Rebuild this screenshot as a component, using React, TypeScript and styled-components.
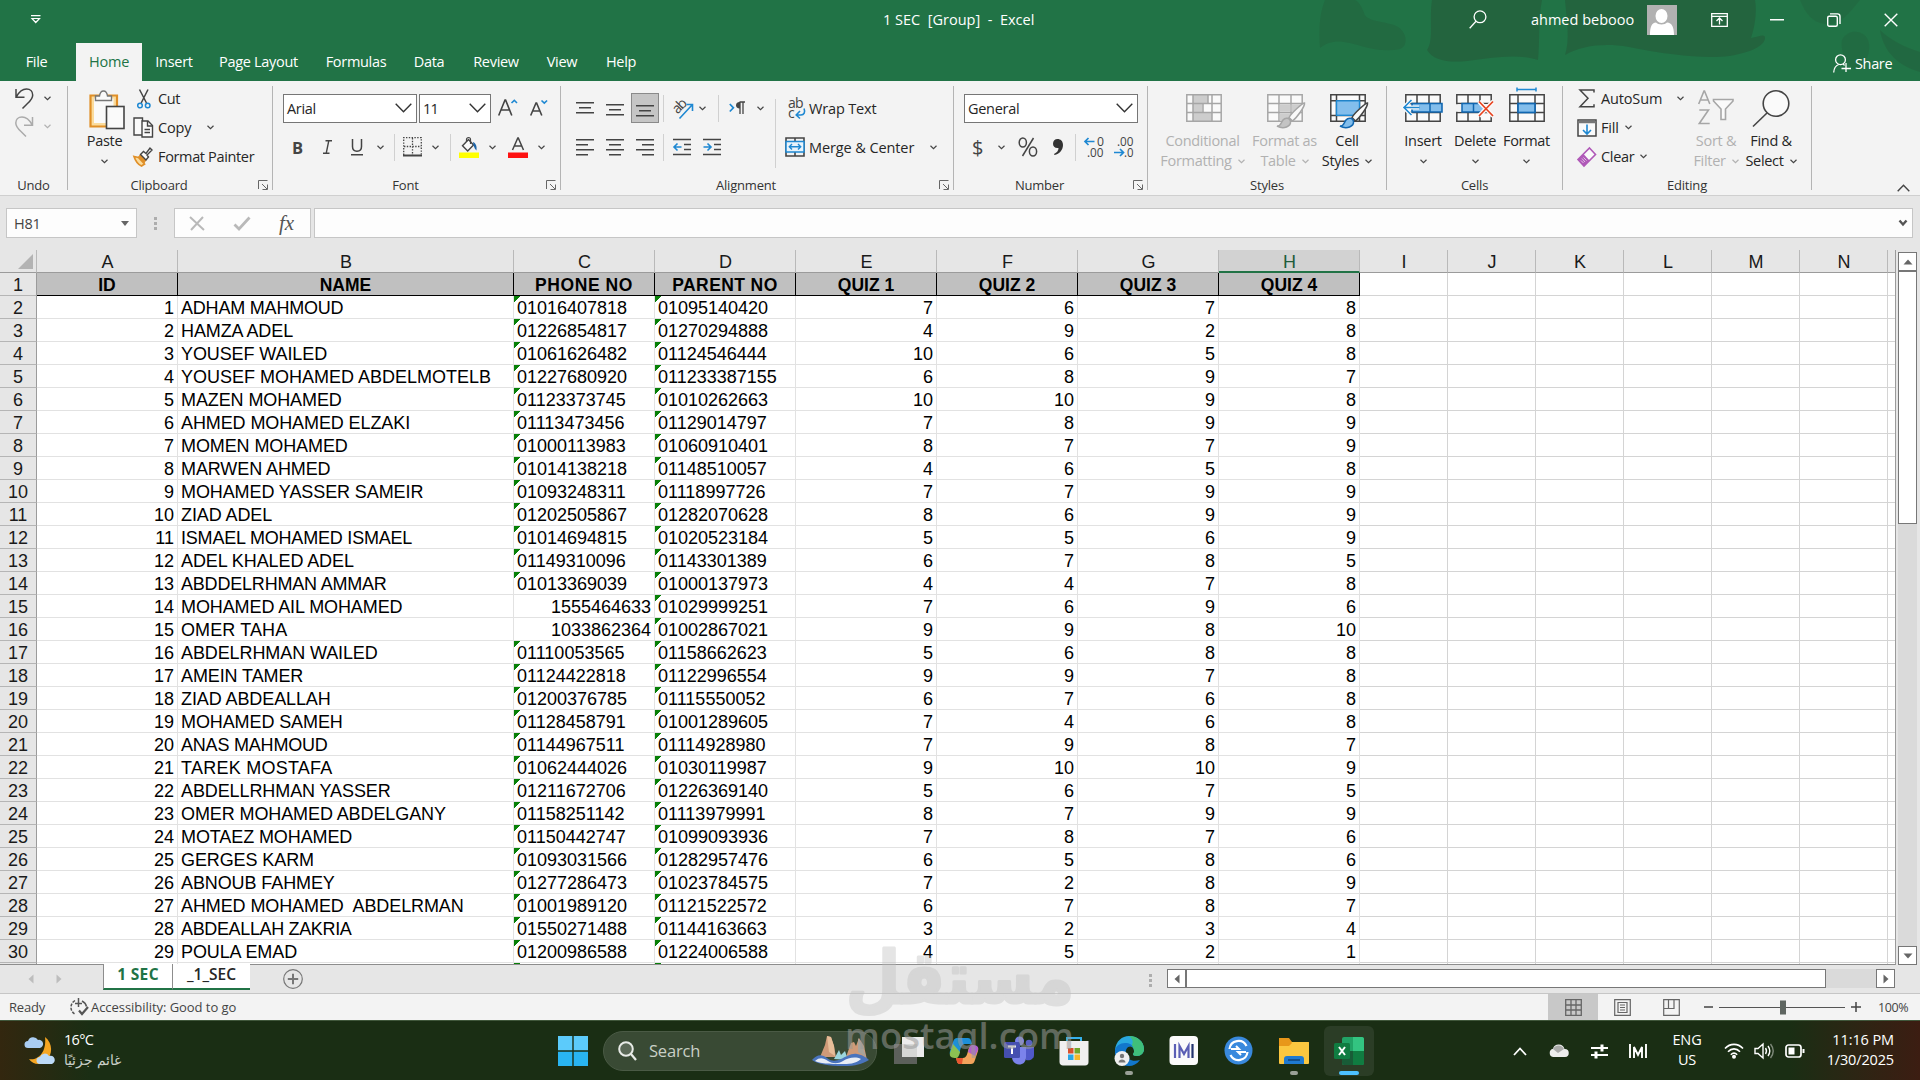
import React from "react";
import styled, { createGlobalStyle, css } from "styled-components";

const GlobalStyle = createGlobalStyle`
  * { box-sizing: border-box; }
  body {
    margin: 0;
    overflow: hidden;
    background: #e6e6e6;
    font-family: "Open Sans", "Noto Sans", sans-serif;
    color: #262626;
  }
  svg { display: block; flex: none; overflow: visible; }
`;

const green = "#217346";
const ink = "#444444";
const blue = "#1e88d2";

const Screen = styled.div`
  width: 1920px;
  height: 1080px;
  display: flex;
  flex-direction: column;
  position: relative;
  overflow: hidden;
`;

/* ---------- title bar and tabs ---------- */

const Header = styled.header`
  height: 81px;
  background: ${green};
  color: #fff;
  position: relative;
  flex: none;
`;

const HeaderArt = styled.svg`
  position: absolute;
  right: 0;
  top: 0;
`;

const TitleBar = styled.div`
  height: 43px;
  display: flex;
  align-items: center;
  position: relative;
  padding-bottom: 4px;
`;

const DocTitle = styled.span`
  font-size: 14.5px;
  white-space: pre;
`;

const TabBar = styled.nav`
  height: 38px;
  display: flex;
  position: relative;
`;

const Tab = styled.div<{ $w: number; $active?: boolean; $ls?: number }>`
  width: ${(p) => p.$w}px;
  line-height: 37px;
  text-align: center;
  font-size: 14.5px;
  letter-spacing: ${(p) => p.$ls ?? -0.3}px;
  white-space: nowrap;
  ${(p) =>
    p.$active &&
    css`
      background: #f3f3f3;
      color: ${green};
    `}
`;

const Share = styled.div`
  display: flex;
  align-items: center;
  gap: 4px;
  font-size: 14.5px;
  letter-spacing: -0.35px;
  margin: 2px 0 0 1180px;
`;

/* ---------- shared bits ---------- */

const Slot = styled.div<{ $w: number }>`
  width: ${(p) => p.$w}px;
  flex: none;
  display: flex;
  align-items: center;
`;

const Grow = styled.div`
  flex: 1;
`;

const Text = styled.span<{
  $size?: number;
  $ls?: number;
  $color?: string;
  $bold?: boolean;
}>`
  font-size: ${(p) => p.$size ?? 14.5}px;
  letter-spacing: ${(p) => p.$ls ?? -0.35}px;
  color: ${(p) => p.$color ?? "inherit"};
  font-weight: ${(p) => (p.$bold ? 700 : 400)};
  white-space: nowrap;
`;

/* ---------- ribbon ---------- */

const Ribbon = styled.section`
  height: 115px;
  padding-top: 5px;
  display: flex;
  align-items: flex-start;
  background: #f3f3f3;
  border-bottom: 1px solid #cfcfcf;
  flex: none;
`;

const Group = styled.div<{ $w: number }>`
  width: ${(p) => p.$w}px;
  height: 104px;
  flex: none;
  display: flex;
  flex-direction: column;
  border-right: 1px solid #b4b4b4;
`;

const GroupBody = styled.div`
  height: 94px;
  display: flex;
`;

const GroupLabel = styled.div<{ $launcher?: boolean }>`
  height: 10px;
  line-height: 10px;
  display: grid;
  grid-template-columns: ${(p) => (p.$launcher ? "1fr 14px" : "1fr")};
  column-gap: 8px;
  text-align: center;
  font-size: 13px;
  letter-spacing: -0.2px;
  color: #333;
`;

const Rows = styled.div<{ $three?: boolean }>`
  display: flex;
  flex-direction: column;
  ${(p) =>
    p.$three
      ? css`
          margin-top: -2px;
        `
      : css`
          padding-top: 7px;
          gap: 9px;
        `}
`;

const Row = styled.div<{ $h?: number }>`
  height: ${(p) => p.$h ?? 30}px;
  display: flex;
  align-items: center;
`;

const BigButton = styled.div<{ $w: number; $off?: boolean }>`
  width: ${(p) => p.$w}px;
  flex: none;
  display: flex;
  flex-direction: column;
  align-items: center;
  font-size: 14.5px;
  letter-spacing: -0.3px;
  white-space: nowrap;
  color: ${(p) => (p.$off ? "#b1b1b1" : "#262626")};
`;

const BigIcon = styled.div`
  height: 45px;
  display: flex;
  align-items: flex-start;
`;

const BigLine = styled.div`
  height: 20px;
  line-height: 20px;
  display: flex;
  align-items: center;
  gap: 6px;
`;

const Combo = styled.div<{ $w: number }>`
  width: ${(p) => p.$w}px;
  height: 29px;
  flex: none;
  display: flex;
  align-items: center;
  justify-content: space-between;
  padding: 0 4px 0 3px;
  background: #fff;
  border: 1px solid #767676;
`;

const Rule = styled.div<{ $h?: number }>`
  width: 1px;
  height: ${(p) => p.$h ?? 27}px;
  background: #d0d0d0;
`;

const Pressed = styled.div`
  width: 28px;
  height: 30px;
  display: flex;
  align-items: center;
  justify-content: center;
  background: #c5c5c5;
  border: 1px solid #8a8a8a;
`;

const Collapse = styled.div`
  margin: 98px 0 0 85px;
`;

const Chevron = ({ color = ink }: { color?: string }) => (
  <svg width="7" height="5" viewBox="0 0 7 5" fill="none">
    <path d="M0.5 0.8l3 2.8 3-2.8" stroke={color} strokeWidth="1.2" />
  </svg>
);

const WideChevron = () => (
  <svg width="17" height="10" viewBox="0 0 17 10" fill="none">
    <path d="M0.7 0.7l7.8 8 7.8-8" stroke="#333" strokeWidth="1.4" />
  </svg>
);

const Launcher = () => (
  <svg width="10" height="10" viewBox="0 0 10 10" fill="none">
    <path d="M0.5 9V0.5H9.5M4 4l5 5M9.5 4.5v5h-5" stroke="#666" />
  </svg>
);

const Lines = ({ rows }: { rows: [number, number, number][] }) => (
  <svg width="18" height="18" viewBox="0 0 18 18">
    {rows.map(([x1, x2, y]) => (
      <rect key={y} x={x1} y={y} width={x2 - x1} height="1.5" fill={ink} />
    ))}
  </svg>
);

const UndoIcon = ({ redo }: { redo?: boolean }) => (
  <svg width="19" height="21" viewBox="0 0 19 21" fill="none">
    <g
      transform={redo ? "translate(18.5 0) scale(-1 1)" : undefined}
      stroke={redo ? "#ababab" : ink}
      strokeWidth="1.5"
    >
      <path d="M1 1v8.2h8.5M1.3 8.8C4 4 7 1 11.5 1c4 0 6.2 2.8 6.2 6 0 4-3 6.5-5.7 9L7.5 20.5" />
    </g>
  </svg>
);

const PasteIcon = () => (
  <svg width="36" height="42" viewBox="0 -3.5 36 42">
    <rect x="2" y="6.5" width="26" height="30.5" fill="#fbdc9d" />
    <path d="M1.5 6h26.5v31H1.5z" fill="none" stroke="#e08f27" strokeWidth="2.2" />
    <rect x="5" y="9" width="19.5" height="24.5" fill="#fafafa" />
    <path
      d="M6.5 11V6.5h4C11 3 12.5 1.5 14.5 1.5S18 3 18.5 6.5h4V11z"
      fill="#fafafa"
      stroke="#777"
      strokeWidth="1.4"
    />
    <rect x="17.5" y="17" width="17.5" height="22" fill="#fafafa" stroke={ink} strokeWidth="1.6" />
  </svg>
);

const CutIcon = () => (
  <svg width="14" height="20" viewBox="0 0 14 20" fill="none">
    <path d="M2.5 0.5l7 13.5M11 0.5L4.2 14" stroke={ink} strokeWidth="1.5" />
    <circle cx="3" cy="16.5" r="2.3" stroke={blue} strokeWidth="1.5" />
    <circle cx="10.7" cy="16.5" r="2.3" stroke={blue} strokeWidth="1.5" />
  </svg>
);

const CopyIcon = () => (
  <svg width="21" height="21" viewBox="0 0 21 21" fill="#fafafa" stroke={ink} strokeWidth="1.4">
    <path d="M9 18H1V1h8.5v3" />
    <path d="M9 4h6l4.5 4.5V20H9z" />
    <path d="M14.5 4v5h5M11.5 12.5h5.5M11.5 15.5h5.5" fill="none" />
  </svg>
);

const PainterIcon = () => (
  <svg width="20" height="20" viewBox="0 0 20 20" fill="none">
    <path d="M1 9.5l4.5 1 6 6.5-3 2C5 17.5 2.5 14 1 9.5z" fill="#fbdc9d" stroke="#e08f27" strokeWidth="1.7" />
    <path d="M5.5 10l2-2.5L13 13l-2 3z" fill="#e08f27" stroke="#e08f27" />
    <path d="M7.5 7.5l3-3 2.5 2L17 1l2 2-5 5 1.5 2-2.5 3z" fill="#fafafa" stroke={ink} strokeWidth="1.4" />
  </svg>
);

const FontSizeIcon = ({ down }: { down?: boolean }) => (
  <svg width="20" height="20" viewBox="0 0 20 20" fill="none">
    {down ? (
      <>
        <path d="M0.7 17.5L6 5h.6l5.2 12.5M2.6 13h7.4" stroke={ink} strokeWidth="1.6" />
        <path d="M11.5 2.5l2.8 2.7 2.8-2.7" stroke={blue} strokeWidth="1.6" />
      </>
    ) : (
      <>
        <path d="M0.7 17.5L7 2h.6l6.2 15.5M3 12h8.8" stroke={ink} strokeWidth="1.6" />
        <path d="M13.5 5l2.8-2.7L19 5" stroke={blue} strokeWidth="1.6" />
      </>
    )}
  </svg>
);

const BordersIcon = () => (
  <svg width="19" height="20" viewBox="0 0 19 20" fill="none" stroke={ink}>
    <path
      d="M0.7 18V0.7h17.6V18M9.5 1v17M1 9.5h17"
      strokeWidth="1.3"
      strokeDasharray="1.4 1.4"
    />
    <path d="M0 18.5h19" strokeWidth="2" />
  </svg>
);

const FillColorIcon = () => (
  <svg width="20" height="21" viewBox="0 0 20 21" fill="none">
    <path d="M3.5 8.8L9.5 2.5l5 5.5-5.8 6z" fill="#fafafa" stroke={ink} strokeWidth="1.4" />
    <path d="M7.5 5V2.5a2 2 0 014 0V7" stroke={ink} strokeWidth="1.2" />
    <path d="M14 5c3 1.5 4 4 3.5 8.5-1.5-1-2-3-3-5z" fill="#1d64a8" />
    <rect y="15.5" width="20" height="5.5" fill="#ffff00" />
  </svg>
);

const FontColorIcon = () => (
  <svg width="20" height="21" viewBox="0 0 20 21" fill="none">
    <path d="M4.5 13L9.8 1h.5l5.2 12M6.5 9h7.2" stroke={ink} strokeWidth="1.5" />
    <rect y="15.5" width="20" height="5.5" fill="#fe1111" />
  </svg>
);

const OrientationIcon = () => (
  <svg width="21" height="21" viewBox="0 0 21 21" fill="none">
    <text
      x="0"
      y="0"
      fontSize="14"
      fill={ink}
      transform="translate(5.5 16.5) rotate(-45)"
      fontFamily="Open Sans"
      textLength="15"
    >
      ab
    </text>
    <path d="M7.5 20.5L20 7M14.5 6.5h6v6.5" stroke={blue} strokeWidth="1.6" />
  </svg>
);

const DirectionIcon = () => (
  <svg width="17" height="14" viewBox="0 0 17 14" fill="none">
    <path d="M0.8 3l3.6 3.8L0.8 10.5" stroke={blue} strokeWidth="1.7" />
    <path d="M10.5 1H16M11 1v12M14 1v12" stroke={ink} strokeWidth="1.3" />
    <path d="M11 7.5C8 7.5 7 6 7 4.2S8.2 1 10.5 1h.5z" fill={ink} />
  </svg>
);

const IndentIcon = ({ right }: { right?: boolean }) => (
  <svg width="19" height="18" viewBox="0 0 19 18" fill="none">
    <path d="M0 1.5h18M11 6.5h7M11 11.5h7M0 16.5h18" stroke={ink} strokeWidth="1.5" />
    <path
      d={right ? "M0.5 9h7M4.5 5.5L8 9l-3.5 3.5" : "M8.5 9H1M4.5 5.5L1 9l3.5 3.5"}
      stroke={blue}
      strokeWidth="1.6"
    />
  </svg>
);

const WrapIcon = () => (
  <svg width="18" height="21" viewBox="0 0 18 21" fill="none">
    <text x="0" y="9.5" fontSize="14" fill={ink} fontFamily="Open Sans" textLength="15.5">
      ab
    </text>
    <text x="0" y="20" fontSize="14" fill={ink} fontFamily="Open Sans">
      c
    </text>
    <path d="M16 10.5c1.5 3.5 0 6.5-3 6.5H8.5M12 13l-3.8 4 3.8 3.5" stroke={blue} strokeWidth="1.6" />
  </svg>
);

const MergeIcon = () => (
  <svg width="20" height="20" viewBox="0 0 20 20" fill="none">
    <path d="M1 1h18v18H1zM10 1v4M10 15v4" stroke={ink} strokeWidth="1.6" />
    <rect x="1" y="4.5" width="18" height="10.5" fill="#e8f3fb" stroke={blue} strokeWidth="1.5" />
    <path d="M4.5 9.7h11M7 7L4.3 9.7 7 12.5M13 7l2.7 2.7L13 12.5" stroke={blue} strokeWidth="1.4" />
  </svg>
);

const DecimalIcon = ({ more }: { more?: boolean }) => (
  <svg width="20" height="22" viewBox="0 0 20 22" fill="none">
    <text
      x={more ? 13 : 3}
      y="9.5"
      fontSize="12.5"
      fill={ink}
      fontFamily="Open Sans"
      textLength={more ? 7 : 16.5}
      lengthAdjust="spacingAndGlyphs"
    >
      {more ? "0" : ".00"}
    </text>
    <text
      x={more ? 3 : 10}
      y="21"
      fontSize="12.5"
      fill={ink}
      fontFamily="Open Sans"
      textLength={more ? 16.5 : 9.5}
      lengthAdjust="spacingAndGlyphs"
    >
      {more ? ".00" : ".0"}
    </text>
    <path
      d={more ? "M10.5 5.5H1M4.5 2L1 5.5 4.500 9" : "M0 16.500h9.500M6 13l3.500 3.500L6 20"}
      stroke={blue}
      strokeWidth="1.7"
    />
  </svg>
);

const Sheet = ({ color = ink }: { color?: string }) => (
  <path
    d="M0.8 0.8h34.4v26.4H0.8zM12 1v26M24 1v26M1 9.5h34M1 18.5h34"
    fill="#fafafa"
    stroke={color}
    strokeWidth="1.5"
  />
);

const CondFormatIcon = () => (
  <svg width="36" height="34" viewBox="0 -8 36 34">
    <rect x="0" y="0" width="36" height="28" fill="#fafafa" />
    <path d="M7 1h15v8H7zM7 9h9.5v9.5H7zM7 18.5h19V27H7z" fill="#cdcdcd" />
    <path
      d="M0.8 0.8h34.4v26.4H0.8zM7 1v26M26 1v26M1 9.5h34M1 18.5h34M22 1v8.5M17 9.5v9"
      fill="none"
      stroke="#a6a6a6"
      strokeWidth="1.5"
    />
  </svg>
);

const Brush = ({ stroke, fill, tip }: { stroke: string; fill: string; tip: string }) => (
  <>
    <path
      d="M37.500 9c-2 0-13 10-15.500 14.500l3.500 3.500C30 23.500 38 12.500 37.500 9z"
      fill="#fafafa"
      stroke={stroke}
      strokeWidth="1.5"
    />
    <path d="M10 32c4 .5 4-3.500 6-6 2.500-3 7-2 7.500 1.500C24 32 17 36 10 32z" fill={fill} stroke={tip} strokeWidth="1.5" />
  </>
);

const FormatTableIcon = () => (
  <svg width="40" height="36" viewBox="-2 -8 40 36">
    <Sheet color="#a6a6a6" />
    <path d="M12.7 10.2h10.6v7.6H12.7zM24.7 10.2h10v7.6h-10zM12.7 19.2h10.6v7.3H12.7z" fill="#cdcdcd" />
    <Brush stroke="#a6a6a6" fill="#c4c4c4" tip="#a6a6a6" />
  </svg>
);

const CellStylesIcon = () => (
  <svg width="40" height="36" viewBox="-2 -8 40 36">
    <path
      d="M0.8 0.8h34.4v26.4H0.8zM6.5 1v26M29.5 1v26M1 6.8h34M1 21.5h34"
      fill="#fafafa"
      stroke={ink}
      strokeWidth="1.5"
    />
    <rect x="6.5" y="6.8" width="23" height="14.5" fill="#83beec" stroke={blue} strokeWidth="1.4" />
    <Brush stroke={ink} fill="#83beec" tip="#1167b1" />
  </svg>
);

const InsertIcon = () => (
  <svg width="40" height="36" viewBox="0 -8 40 36" fill="none">
    <g transform="translate(2 0)">
      <Sheet />
    </g>
    <path d="M9 9.5h30V18H9z" fill="#83beec" stroke="#1167b1" strokeWidth="1.6" />
    <path d="M27 9.5V18" stroke="#1167b1" strokeWidth="1.5" />
    <path d="M16 13.5H1M8 6L1 13.5 8 21" stroke="#fafafa" strokeWidth="4" />
    <path d="M16.5 13.5H1M8.5 6L1 13.5 8.5 21" stroke={blue} strokeWidth="1.6" />
  </svg>
);

const DeleteIcon = () => (
  <svg width="38" height="36" viewBox="0 -8 38 36" fill="none">
    <Sheet />
    <path d="M0 10.3h5.3v7.4H0zM24 10h12v8H24z" fill="#f3f3f3" />
    <path d="M6 9.5h20l3 4.5-3 4H6z" fill="#83beec" stroke="#1167b1" strokeWidth="1.5" />
    <path d="M17.5 9.5V18" stroke="#1167b1" strokeWidth="1.5" />
    <path d="M23 7.5L37 22M37 7.5L23 22" stroke="#fafafa" strokeWidth="4.5" />
    <path d="M23 7.5L37 22M37 7.5L23 22" stroke="#e8431f" strokeWidth="1.7" />
  </svg>
);

const FormatIcon = () => (
  <svg width="36" height="36" viewBox="0 -8 36 36" fill="none">
    <path
      d="M0.8 0.8h34.4v26.4H0.8zM9 1v26M26 1v26M1 9.5h34M1 18.5h34"
      fill="#fafafa"
      stroke={ink}
      strokeWidth="1.5"
    />
    <rect x="9" y="9.5" width="17" height="9" fill="#83beec" stroke="#1167b1" strokeWidth="1.7" />
    <path d="M8 -4.5h19M8 -6.5v4M27 -6.5v4" stroke={blue} strokeWidth="1.5" />
  </svg>
);

const SigmaIcon = () => (
  <svg width="16" height="19" viewBox="0 0 16 19" fill="none">
    <path d="M15 3.5V1H1l8 8.3L1 17.8h14v-2.5" stroke={ink} strokeWidth="1.5" />
  </svg>
);

const FillDownIcon = () => (
  <svg width="20" height="18" viewBox="0 0 20 18" fill="none">
    <path d="M1 1h18v16H1z" fill="#fafafa" stroke={ink} strokeWidth="1.5" />
    <path d="M1 3h18" stroke="#777" strokeWidth="2.5" />
    <path d="M10 5.5v9M6 11l4 4 4-4" stroke={blue} strokeWidth="1.6" />
  </svg>
);

const ClearIcon = () => (
  <svg width="20" height="20" viewBox="0 0 20 20">
    <path d="M12.5 1l6 6.5L7 19l-6-6.5z" fill="#fafafa" stroke="#b059b8" strokeWidth="1.6" />
    <path d="M6.5 7l6 6.5L7 19l-6-6.5z" fill="#b059b8" />
    <path d="M5 11.5l3 3.5M4 13.5l2.5 2.5M6.5 10.5l3 3" stroke="#e9cdec" strokeWidth="0.9" />
  </svg>
);

const SortIcon = () => (
  <svg width="36" height="40" viewBox="0 -4 36 40" fill="none" stroke="#a6a6a6" strokeWidth="1.6">
    <path d="M0.7 14L6 1h.5l5.3 13M2.6 10h7.4M1.3 20h9.2L1.3 33.5h10.4" />
    <path d="M15.5 9.5h19.5v1.5L27.5 19v10.5h-4.5V19l-7.5-8z" fill="#fafafa" />
  </svg>
);

const FindIcon = () => (
  <svg width="38" height="40" viewBox="0 -3 38 40" fill="none" stroke={ink} strokeWidth="1.6">
    <circle cx="24" cy="14.5" r="12.8" fill="#fafafa" />
    <path d="M15 24L1 37.5" />
  </svg>
);

const RibbonBar = () => (
  <Ribbon>
    <Group $w={68}>
      <GroupBody>
        <Rows $three>
          <Row $h={28}>
            <Slot $w={15} />
            <Slot $w={29}><UndoIcon /></Slot>
            <Chevron />
          </Row>
          <Row $h={29}>
            <Slot $w={15} />
            <Slot $w={29}><UndoIcon redo /></Slot>
            <Chevron color="#b1b1b1" />
          </Row>
        </Rows>
      </GroupBody>
      <GroupLabel>Undo</GroupLabel>
    </Group>

    <Group $w={205}>
      <GroupBody>
        <Slot $w={14} />
        <BigButton $w={45}>
          <BigIcon><Slot $w={5} /><PasteIcon /></BigIcon>
          <BigLine>Paste</BigLine>
          <BigLine><Chevron /></BigLine>
        </BigButton>
        <Slot $w={6} />
        <Rows $three>
          <Row $h={29}>
            <Slot $w={4} />
            <Slot $w={21}><CutIcon /></Slot>
            <Text>Cut</Text>
          </Row>
          <Row $h={29}>
            <Slot $w={25}><CopyIcon /></Slot>
            <Slot $w={49}><Text $ls={-0.2}>Copy</Text></Slot>
            <Chevron />
          </Row>
          <Row $h={29}>
            <Slot $w={25}><PainterIcon /></Slot>
            <Text>Format Painter</Text>
          </Row>
        </Rows>
      </GroupBody>
      <GroupLabel $launcher><span>Clipboard</span><Launcher /></GroupLabel>
    </Group>

    <Group $w={288}>
      <GroupBody>
        <Rows>
          <Row>
            <Slot $w={10} />
            <Slot $w={136}>
              <Combo $w={134}><Text>Arial</Text><WideChevron /></Combo>
            </Slot>
            <Slot $w={79}>
              <Combo $w={72}><Text $ls={-0.9}>11</Text><WideChevron /></Combo>
            </Slot>
            <Slot $w={32}><FontSizeIcon /></Slot>
            <FontSizeIcon down />
          </Row>
          <Row>
            <Slot $w={19} />
            <Slot $w={31}><Text $bold $size={16.5} $color={ink}>B</Text></Slot>
            <Slot $w={28}>
              <svg width="9" height="14" viewBox="0 0 9 14" fill="none">
                <path d="M2.5 0.7H9M0 13.3h6.5M5.8 0.7L3.2 13.3" stroke={ink} strokeWidth="1.4" />
              </svg>
            </Slot>
            <Slot $w={26}>
              <svg width="12" height="17" viewBox="0 0 12 17" fill="none">
                <path
                  d="M1.5 0v7.5c0 3.2 1.5 4.7 4.5 4.7s4.5-1.5 4.5-4.7V0M0 15.7h12"
                  stroke={ink}
                  strokeWidth="1.5"
                />
              </svg>
            </Slot>
            <Slot $w={17}><Chevron /></Slot>
            <Slot $w={9}><Rule /></Slot>
            <Slot $w={29}><BordersIcon /></Slot>
            <Slot $w={18}><Chevron /></Slot>
            <Slot $w={9}><Rule /></Slot>
            <Slot $w={30}><FillColorIcon /></Slot>
            <Slot $w={19}><Chevron /></Slot>
            <Slot $w={30}><FontColorIcon /></Slot>
            <Chevron />
          </Row>
        </Rows>
      </GroupBody>
      <GroupLabel $launcher><span>Font</span><Launcher /></GroupLabel>
    </Group>

    <Group $w={393}>
      <GroupBody>
        <Rows>
          <Row>
            <Slot $w={15} />
            <Slot $w={30}><Lines rows={[[0, 18, 3], [3, 15, 8], [0, 18, 13]]} /></Slot>
            <Slot $w={25}><Lines rows={[[0, 18, 5], [3, 15, 10], [0, 18, 15]]} /></Slot>
            <Slot $w={32}>
              <Pressed><Lines rows={[[0, 18, 6], [3, 15, 11], [0, 18, 16]]} /></Pressed>
            </Slot>
            <Slot $w={9}><Rule /></Slot>
            <Slot $w={27}><OrientationIcon /></Slot>
            <Slot $w={19}><Chevron /></Slot>
            <Slot $w={11}><Rule /></Slot>
            <Slot $w={28}><DirectionIcon /></Slot>
            <Chevron />
          </Row>
          <Row>
            <Slot $w={15} />
            <Slot $w={30}><Lines rows={[[0, 18, 1], [0, 12, 6], [0, 18, 11], [0, 12, 16]]} /></Slot>
            <Slot $w={30}><Lines rows={[[0, 18, 1], [3, 15, 6], [0, 18, 11], [3, 15, 16]]} /></Slot>
            <Slot $w={27}><Lines rows={[[0, 18, 1], [6, 18, 6], [0, 18, 11], [6, 18, 16]]} /></Slot>
            <Slot $w={10}><Rule /></Slot>
            <Slot $w={30}><IndentIcon /></Slot>
            <IndentIcon right />
          </Row>
        </Rows>
        <Slot $w={11} />
        <Slot $w={10}><Rule $h={69} /></Slot>
        <Rows>
          <Row>
            <Slot $w={3} />
            <Slot $w={21}><WrapIcon /></Slot>
            <Text $ls={-0.15}>Wrap Text</Text>
          </Row>
          <Row>
            <Slot $w={24}><MergeIcon /></Slot>
            <Slot $w={121}><Text $ls={-0.1}>Merge &amp; Center</Text></Slot>
            <Chevron />
          </Row>
        </Rows>
      </GroupBody>
      <GroupLabel $launcher><span>Alignment</span><Launcher /></GroupLabel>
    </Group>

    <Group $w={194}>
      <GroupBody>
        <Rows>
          <Row>
            <Slot $w={10} />
            <Combo $w={174}><Text $ls={-0.3}>General</Text><WideChevron /></Combo>
          </Row>
          <Row>
            <Slot $w={18} />
            <Slot $w={26}><Text $size={20} $color={ink}>$</Text></Slot>
            <Slot $w={20}><Chevron /></Slot>
            <Slot $w={35}>
              <svg width="20" height="20" viewBox="0 0 20 20" fill="none" stroke={ink} strokeWidth="1.5">
                <path d="M15.5 1L4.5 19" />
                <ellipse cx="4.8" cy="5.5" rx="3.6" ry="4.5" />
                <ellipse cx="15" cy="14.5" rx="3.6" ry="4.5" />
              </svg>
            </Slot>
            <Slot $w={22}>
              <svg width="10" height="16" viewBox="0 0 10 16">
                <path
                  d="M4.5 0C7.5 0 10 2 10 6c0 5-3.5 9-8.5 10l-.5-1c3-1.5 4.5-3.5 4.5-6C2 9.5 0 7.5 0 4.8 0 2 2 0 4.5 0z"
                  fill="#333"
                />
              </svg>
            </Slot>
            <Slot $w={9}><Rule /></Slot>
            <Slot $w={30}><DecimalIcon more /></Slot>
            <DecimalIcon />
          </Row>
        </Rows>
      </GroupBody>
      <GroupLabel $launcher><span>Number</span><Launcher /></GroupLabel>
    </Group>

    <Group $w={239}>
      <GroupBody>
        <Slot $w={8} />
        <BigButton $w={93} $off>
          <BigIcon><Slot $w={3} /><CondFormatIcon /></BigIcon>
          <BigLine>Conditional</BigLine>
          <BigLine>Formatting <Chevron color="#b1b1b1" /></BigLine>
        </BigButton>
        <BigButton $w={71} $off>
          <BigIcon><FormatTableIcon /></BigIcon>
          <BigLine>Format as</BigLine>
          <BigLine>Table <Chevron color="#b1b1b1" /></BigLine>
        </BigButton>
        <BigButton $w={54}>
          <BigIcon><Slot $w={2} /><CellStylesIcon /></BigIcon>
          <BigLine>Cell</BigLine>
          <BigLine>Styles <Chevron /></BigLine>
        </BigButton>
      </GroupBody>
      <GroupLabel>Styles</GroupLabel>
    </Group>

    <Group $w={176}>
      <GroupBody>
        <Slot $w={10} />
        <BigButton $w={52}>
          <BigIcon><InsertIcon /></BigIcon>
          <BigLine>Insert</BigLine>
          <BigLine><Chevron /></BigLine>
        </BigButton>
        <BigButton $w={52}>
          <BigIcon><DeleteIcon /></BigIcon>
          <BigLine>Delete</BigLine>
          <BigLine><Chevron /></BigLine>
        </BigButton>
        <BigButton $w={51}>
          <BigIcon><FormatIcon /></BigIcon>
          <BigLine>Format</BigLine>
          <BigLine><Chevron /></BigLine>
        </BigButton>
      </GroupBody>
      <GroupLabel>Cells</GroupLabel>
    </Group>

    <Group $w={249}>
      <GroupBody>
        <Slot $w={14} />
        <Rows $three>
          <Row $h={29}>
            <Slot $w={2} />
            <Slot $w={22}><SigmaIcon /></Slot>
            <Slot $w={76}><Text $ls={-0.15}>AutoSum</Text></Slot>
            <Chevron />
          </Row>
          <Row $h={29}>
            <Slot $w={24}><FillDownIcon /></Slot>
            <Slot $w={24}><Text $ls={-0.2}>Fill</Text></Slot>
            <Chevron />
          </Row>
          <Row $h={29}>
            <Slot $w={24}><ClearIcon /></Slot>
            <Slot $w={39}><Text $ls={-0.3}>Clear</Text></Slot>
            <Chevron />
          </Row>
        </Rows>
        <Slot $w={4} />
        <BigButton $w={56} $off>
          <BigIcon><SortIcon /></BigIcon>
          <BigLine>Sort &amp;</BigLine>
          <BigLine>Filter <Chevron color="#b1b1b1" /></BigLine>
        </BigButton>
        <BigButton $w={54}>
          <BigIcon><FindIcon /></BigIcon>
          <BigLine>Find &amp;</BigLine>
          <BigLine>Select <Chevron /></BigLine>
        </BigButton>
      </GroupBody>
      <GroupLabel>Editing</GroupLabel>
    </Group>

    <Collapse>
      <svg width="13" height="8" viewBox="0 0 13 8" fill="none">
        <path d="M0.7 7.3l5.8-6 5.8 6" stroke={ink} strokeWidth="1.4" />
      </svg>
    </Collapse>
  </Ribbon>
);

/* ---------- formula bar ---------- */

const FormulaBar = styled.section`
  height: 54px;
  padding: 12px 7px 0 6px;
  display: flex;
  align-items: flex-start;
  background: #e6e6e6;
  flex: none;
`;

const Field = styled.div<{ $w?: number; $gap?: number }>`
  height: 30px;
  ${(p) => (p.$w ? `width: ${p.$w}px; flex: none;` : "flex: 1;")}
  margin-right: ${(p) => p.$gap ?? 0}px;
  display: flex;
  align-items: center;
  background: #fdfdfd;
  border: 1px solid #c6c6c6;
`;

const Dots = styled.div<{ $ml: number; $mr: number }>`
  width: 3px;
  height: 30px;
  margin: 0 ${(p) => p.$mr}px 0 ${(p) => p.$ml}px;
  display: flex;
  flex-direction: column;
  justify-content: center;
  gap: 2px;
  &::before,
  &::after,
  & > i {
    content: "";
    display: block;
    width: 3px;
    height: 3px;
    background: #adadad;
  }
`;

const Fx = styled.span`
  font-family: "Liberation Serif", serif;
  font-style: italic;
  font-size: 21px;
  color: #555;
`;

/* ---------- grid ---------- */

const GridArea = styled.main`
  height: 715px;
  display: flex;
  flex: none;
  background: #e6e6e6;
`;

const Grid = styled.div`
  width: 1896px;
  height: 715px;
  overflow: hidden;
  font-family: "Liberation Sans", Arial, sans-serif;
  font-size: 18px;
  color: #000;
  border-right: 1px solid #9b9b9b;
  border-bottom: 1px solid #8d8d8d;
`;

const GridRow = styled.div`
  height: 23px;
  display: flex;
`;

const ColumnHead = styled.div<{ $w: number; $selected?: boolean }>`
  width: ${(p) => p.$w}px;
  height: 23px;
  flex: none;
  text-align: center;
  line-height: 24px;
  padding-left: 1px;
  color: ${(p) => (p.$selected ? "#1f5c3b" : "#1a1a1a")};
  background: ${(p) => (p.$selected ? "#d2d2d2" : "#e6e6e6")};
  border-right: 1px solid #b9b9b9;
  border-bottom: ${(p) => (p.$selected ? `2px solid ${green}` : "1px solid #9b9b9b")};
`;

const Corner = styled.div`
  width: 37px;
  height: 23px;
  flex: none;
  padding: 4px 0 0 18px;
  border-right: 1px solid #b9b9b9;
  border-bottom: 1px solid #9b9b9b;
`;

const RowHead = styled.div`
  width: 37px;
  flex: none;
  text-align: center;
  line-height: 24px;
  background: #e6e6e6;
  color: #1a1a1a;
  border-right: 1px solid #9b9b9b;
  border-bottom: 1px solid #b5b5b5;
`;

const TitleCell = styled.div<{ $w: number; $ls: number }>`
  width: ${(p) => p.$w}px;
  flex: none;
  text-align: center;
  line-height: 25px;
  font-weight: 700;
  font-size: 17.5px;
  letter-spacing: ${(p) => p.$ls}px;
  background: #c0c0c0;
  border-right: 1px solid #000;
  border-bottom: 1px solid #000;
`;

const Cell = styled.div<{ $w: number; $text?: boolean; $flag?: boolean; $empty?: boolean; $ls?: number }>`
  width: ${(p) => p.$w}px;
  flex: none;
  line-height: 24px;
  white-space: pre;
  padding: 0 3px;
  letter-spacing: ${(p) => p.$ls ?? 0}px;
  text-align: ${(p) => (p.$text ? "left" : "right")};
  border-right: 1px solid ${(p) => (p.$empty ? "#d4d4d4" : "#e2e2e2")};
  border-bottom: 1px solid ${(p) => (p.$empty ? "#d4d4d4" : "#e2e2e2")};
  background: ${(p) =>
    p.$flag ? "linear-gradient(135deg, #078007 4.8px, #fff 4.9px)" : "#fff"};
`;

const students: [string, string, string, number, number, number, number][] = [
  ["ADHAM MAHMOUD", "01016407818", "01095140420", 7, 6, 7, 8],
  ["HAMZA ADEL", "01226854817", "01270294888", 4, 9, 2, 8],
  ["YOUSEF WAILED", "01061626482", "01124546444", 10, 6, 5, 8],
  ["YOUSEF MOHAMED ABDELMOTELB", "01227680920", "011233387155", 6, 8, 9, 7],
  ["MAZEN MOHAMED", "01123373745", "01010262663", 10, 10, 9, 8],
  ["AHMED MOHAMED ELZAKI", "01113473456", "01129014797", 7, 8, 9, 9],
  ["MOMEN MOHAMED", "01000113983", "01060910401", 8, 7, 7, 9],
  ["MARWEN AHMED", "01014138218", "01148510057", 4, 6, 5, 8],
  ["MOHAMED YASSER SAMEIR", "01093248311", "01118997726", 7, 7, 9, 9],
  ["ZIAD ADEL", "01202505867", "01282070628", 8, 6, 9, 9],
  ["ISMAEL MOHAMED ISMAEL", "01014694815", "01020523184", 5, 5, 6, 9],
  ["ADEL KHALED ADEL", "01149310096", "01143301389", 6, 7, 8, 5],
  ["ABDDELRHMAN AMMAR", "01013369039", "01000137973", 4, 4, 7, 8],
  ["MOHAMED AIL MOHAMED", "1555464633", "01029999251", 7, 6, 9, 6],
  ["OMER TAHA", "1033862364", "01002867021", 9, 9, 8, 10],
  ["ABDELRHMAN WAILED", "01110053565", "01158662623", 5, 6, 8, 8],
  ["AMEIN TAMER", "01124422818", "01122996554", 9, 9, 7, 8],
  ["ZIAD ABDEALLAH", "01200376785", "01115550052", 6, 7, 6, 8],
  ["MOHAMED SAMEH", "01128458791", "01001289605", 7, 4, 6, 8],
  ["ANAS MAHMOUD", "01144967511", "01114928980", 7, 9, 8, 7],
  ["TAREK MOSTAFA", "01062444026", "01030119987", 9, 10, 10, 9],
  ["ABDELLRHMAN YASSER", "01211672706", "01226369140", 5, 6, 7, 5],
  ["OMER MOHAMED ABDELGANY", "01158251142", "01113979991", 8, 7, 9, 9],
  ["MOTAEZ MOHAMED", "01150442747", "01099093936", 7, 8, 7, 6],
  ["GERGES KARM", "01093031566", "01282957476", 6, 5, 8, 6],
  ["ABNOUB FAHMEY", "01277286473", "01023784575", 7, 2, 8, 9],
  ["AHMED MOHAMED  ABDELRMAN", "01001989120", "01121522572", 6, 7, 8, 7],
  ["ABDEALLAH ZAKRIA", "01550271488", "01144163663", 3, 2, 3, 4],
  ["POULA EMAD", "01200986588", "01224006588", 4, 5, 2, 1],
];

// tracking for the names that do not sit at the default
const nameTracking: { [name: string]: number } = {
  "YOUSEF MOHAMED ABDELMOTELB": 0,
  "OMER TAHA": 0.1,
  "TAREK MOSTAFA": 0.25,
  "ADHAM MAHMOUD": -0.2,
  "ISMAEL MOHAMED ISMAEL": -0.2,
  "ABDEALLAH ZAKRIA": -0.35,
  "ANAS MAHMOUD": -0.2,
  "ABDDELRHMAN AMMAR": -0.2,
};

const columns: [string, number][] = [
  ["A", 141], ["B", 336], ["C", 141], ["D", 141], ["E", 141], ["F", 141], ["G", 141], ["H", 141],
  ["I", 88], ["J", 88], ["K", 88], ["L", 88], ["M", 88], ["N", 88],
];
const titles = ["ID", "NAME", "PHONE NO", "PARENT NO", "QUIZ 1", "QUIZ 2", "QUIZ 3", "QUIZ 4"];
const spare = [88, 88, 88, 88, 88, 88, 8];

const titleTracking = (t: string) => (t === "PHONE NO" ? 0.6 : t === "PARENT NO" ? 0.4 : 0);

const Spare = () => (
  <>
    {spare.map((w, i) => (
      <Cell key={i} $w={w} $empty />
    ))}
  </>
);

const VScroll = styled.div`
  width: 19px;
  margin: 2px 0 0 2px;
  height: 713px;
  display: flex;
  flex-direction: column;
  background: #dadada;
`;

const ScrollButton = styled.div<{ $w: number; $h: number }>`
  width: ${(p) => p.$w}px;
  height: ${(p) => p.$h}px;
  flex: none;
  display: flex;
  align-items: center;
  justify-content: center;
  background: #fff;
  border: 1px solid #777;
`;

const Arrow = ({ dir, color = "#666" }: { dir: "up" | "down" | "left" | "right"; color?: string }) => {
  const turn = { up: 0, right: 90, down: 180, left: 270 }[dir];
  return (
    <svg width="10" height="10" viewBox="0 0 10 10">
      <path d="M0.5 7.5L5 2.5l4.5 5z" fill={color} transform={`rotate(${turn} 5 5)`} />
    </svg>
  );
};

const SheetGrid = () => (
  <GridArea>
    <Grid>
      <GridRow>
        <Corner>
          <svg width="15" height="15"><path d="M15 0v15H0z" fill="#b3b3b3" /></svg>
        </Corner>
        {columns.map(([name, w]) => (
          <ColumnHead key={name} $w={w} $selected={name === "H"}>{name}</ColumnHead>
        ))}
        <ColumnHead $w={8} />
      </GridRow>
      <GridRow>
        <RowHead>1</RowHead>
        {titles.map((t, i) => (
          <TitleCell key={t} $w={columns[i][1]} $ls={titleTracking(t)}>{t}</TitleCell>
        ))}
        <Spare />
      </GridRow>
      {students.map(([name, phone, parent, ...marks], i) => {
        const isText = phone.startsWith("0");
        return (
          <GridRow key={name}>
            <RowHead>{i + 2}</RowHead>
            <Cell $w={141}>{i + 1}</Cell>
            <Cell $w={336} $text $ls={nameTracking[name] ?? -0.1}>{name}</Cell>
            <Cell $w={141} $text={isText} $flag={isText}>{phone}</Cell>
            <Cell $w={141} $text $flag>{parent}</Cell>
            {marks.map((m, j) => (
              <Cell key={j} $w={141}>{m}</Cell>
            ))}
            <Spare />
          </GridRow>
        );
      })}
      <GridRow>
        <RowHead />
        <Cell $w={141} />
        <Cell $w={336} />
        <Cell $w={141} $flag />
        <Cell $w={141} $flag />
        <Cell $w={141} />
        <Cell $w={141} />
        <Cell $w={141} />
        <Cell $w={141} />
        <Spare />
      </GridRow>
    </Grid>
    <VScroll>
      <ScrollButton $w={19} $h={19}><Arrow dir="up" /></ScrollButton>
      <ScrollButton $w={19} $h={253} />
      <Grow />
      <ScrollButton $w={19} $h={19}><Arrow dir="down" /></ScrollButton>
    </VScroll>
  </GridArea>
);

/* ---------- sheet tabs and status bar ---------- */

const SheetBar = styled.section`
  height: 29px;
  display: flex;
  background: #e6e6e6;
  border-bottom: 1px solid #c6c6c6;
  flex: none;
`;

const SheetTab = styled.div<{ $w: number; $active?: boolean }>`
  width: ${(p) => p.$w}px;
  height: 26px;
  line-height: 21px;
  margin-top: -1px;
  text-align: center;
  font-size: 15.5px;
  font-weight: ${(p) => (p.$active ? 700 : 600)};
  letter-spacing: ${(p) => (p.$active ? 0.35 : 0)}px;
  color: ${(p) => (p.$active ? green : "#262626")};
  background: #fff;
  border-left: 1px solid #8d8d8d;
  border-bottom: 2px solid ${green};
`;

const HScroll = styled.div`
  width: 728px;
  height: 19px;
  margin-top: 4px;
  display: flex;
  background: #dadada;
`;

const StatusBar = styled.footer`
  height: 26px;
  display: flex;
  align-items: center;
  background: #f3f3f3;
  color: #444;
  flex: none;
`;

const ViewButton = styled.div<{ $active?: boolean }>`
  width: ${(p) => (p.$active ? 50 : 49)}px;
  height: 26px;
  display: flex;
  align-items: center;
  justify-content: center;
  background: ${(p) => (p.$active ? "#c8c8c8" : "transparent")};
`;

const Sheets = () => (
  <SheetBar>
    <Slot $w={26} />
    <Slot $w={28}><Arrow dir="left" color="#bdbdbd" /></Slot>
    <Slot $w={49}><Arrow dir="right" color="#bdbdbd" /></Slot>
    <SheetTab $w={69} $active>1 SEC</SheetTab>
    <SheetTab $w={78}>_1_SEC</SheetTab>
    <Slot $w={33} />
    <Slot $w={865}>
      <svg width="20" height="20" viewBox="0 0 20 20" fill="none">
        <circle cx="10" cy="10" r="9.3" stroke="#777" strokeWidth="1.2" />
        <path d="M10 4.8v10.4M4.8 10h10.4" stroke="#777" strokeWidth="2" />
      </svg>
    </Slot>
    <Dots $ml={1} $mr={15}><i /></Dots>
    <HScroll>
      <ScrollButton $w={19} $h={19}><Arrow dir="left" /></ScrollButton>
      <ScrollButton $w={640} $h={19} />
      <Grow />
      <ScrollButton $w={19} $h={19}><Arrow dir="right" /></ScrollButton>
    </HScroll>
  </SheetBar>
);

const Status = () => (
  <StatusBar>
    <Slot $w={9} />
    <Slot $w={61}><Text $size={13} $ls={-0.2}>Ready</Text></Slot>
    <Slot $w={21}>
      <svg width="19" height="18" viewBox="0 0 19 18" fill="none" stroke="#555" strokeWidth="1.5">
        <path d="M5 2.5C2 4.5 0.8 7 1 10c.2 2.5 1.5 4.5 3.500 5.800" strokeDasharray="3 1.3" />
        <path d="M8.500 0v9M5 5.500h7M12 3c2.500 1.300 4 3.200 4.500 5.500" />
        <path d="M9 12.500l3 3.500 6-7" strokeWidth="2.200" />
      </svg>
    </Slot>
    <Slot $w={1457}><Text $size={13} $ls={-0.05}>Accessibility: Good to go</Text></Slot>
    <ViewButton $active>
      <svg width="17" height="17" viewBox="0 0 17 17" fill="none">
        <path d="M0.7 0.7h15.6v15.6H0.7zM6 1v15M11 1v15M1 6h15M1 11h15" stroke="#666" strokeWidth="1.3" />
      </svg>
    </ViewButton>
    <ViewButton>
      <svg width="17" height="17" viewBox="0 0 17 17" fill="none" stroke="#666" strokeWidth="1.2">
        <path d="M0.7 0.7h15.6v15.6H0.7zM4 3.5h9v10H4zM6 6h5M6 8.5h5M6 11h5" />
      </svg>
    </ViewButton>
    <ViewButton>
      <svg width="17" height="17" viewBox="0 0 17 17" fill="none" stroke="#666" strokeWidth="1.2">
        <path d="M0.7 0.7h15.6v15.6H0.7zM1 9.5h10V1M5.5 1v8.5" />
      </svg>
    </ViewButton>
    <Slot $w={8} />
    <Slot $w={174}>
      <svg width="158" height="16" viewBox="0 0 158 16" fill="none">
        <path d="M0 8h9M147 8h10M152 3v10" stroke="#444" strokeWidth="1.5" />
        <path d="M15 8.5h126" stroke="#555" />
        <rect x="76" y="1.5" width="6" height="14" fill="#5f6661" />
      </svg>
    </Slot>
    <Text $size={12.5} $ls={-0.4}>100%</Text>
  </StatusBar>
);

/* ---------- taskbar ---------- */

const Taskbar = styled.footer`
  height: 61px;
  display: flex;
  align-items: center;
  color: #fff;
  border-top: 1px solid #40573b;
  background: linear-gradient(90deg, #33270f 0, #1a2e14 90px, #1a2e14 1790px, #2b2614 1850px, #3c1d12 1920px);
  flex: none;
`;

const Weather = styled.div`
  display: flex;
  flex-direction: column;
  width: 494px;
  line-height: 20px;
  margin-top: -2px;
`;

const SearchBox = styled.div`
  width: 274px;
  height: 40px;
  margin: -1px 17px 0 0;
  padding: 0 8px 0 14px;
  display: flex;
  align-items: center;
  justify-content: space-between;
  border-radius: 20px;
  border: 1px solid #4a5a45;
  background: #394a34;
`;

const TaskButton = styled.div<{ $w: number; $open?: boolean; $focused?: boolean }>`
  width: ${(p) => p.$w}px;
  height: 50px;
  flex: none;
  display: flex;
  flex-direction: column;
  align-items: center;
  justify-content: space-between;
  padding: 10px 0 1px;
  border-radius: 6px;
  background: ${(p) => (p.$focused ? "#2b3d26" : "transparent")};
  &::after {
    content: "";
    width: ${(p) => (p.$focused ? 20 : 8)}px;
    height: 4px;
    border-radius: 2px;
    background: ${(p) => (p.$focused ? "#4cc2ff" : p.$open ? "#9aa097" : "transparent")};
  }
`;

const Clock = styled.div<{ $w: number; $align: string }>`
  width: ${(p) => p.$w}px;
  display: flex;
  flex-direction: column;
  text-align: ${(p) => p.$align};
  line-height: 20px;
  margin-top: -2px;
`;

const Logo = ({ children }: { children: React.ReactNode }) => (
  <svg width="30" height="30" viewBox="0 0 30 30" fill="none">{children}</svg>
);

const Tasks = () => (
  <Taskbar>
    <Slot $w={25} />
    <Slot $w={39}>
      <svg width="30" height="30" viewBox="0 0 30 30">
        <path d="M20 1c8 6 8 18 1 24-5 4.5-13 4-17-2 8 2 18-6 16-22z" fill="#f5a623" />
        <path d="M3 12a3.5 3.5 0 010-7 5.5 5.5 0 0110-1 4 4 0 012 8z" fill="#a9cdf2" />
        <path d="M15 28a3.5 3.5 0 010-7 5 5 0 019-1 4 4 0 013 8z" fill="#bcdaf7" />
      </svg>
    </Slot>
    <Weather>
      <Text $size={14.5} $ls={-0.7}>16°C</Text>
      <Text $size={14} $ls={0} $color="#c9cfc7">غائم جزئيًا</Text>
    </Weather>
    <Slot $w={45}>
      <svg width="30" height="30" viewBox="0 0 30 30">
        <path d="M0 0h14.3v14.3H0zM15.7 0H30v14.3H15.7z" fill="#5ccbfb" />
        <path d="M0 15.7h14.3V30H0zM15.7 15.7H30V30H15.7z" fill="#29b5f2" />
      </svg>
    </Slot>
    <SearchBox>
      <Slot $w={31}>
        <svg width="19" height="20" viewBox="0 0 19 20" fill="none">
          <circle cx="8" cy="8" r="6.8" stroke="#e8ebe7" strokeWidth="2" fill="#5a6856" />
          <path d="M13 13l5 6" stroke="#e8ebe7" strokeWidth="2.2" />
        </svg>
      </Slot>
      <Slot $w={163}><Text $size={16.5} $ls={-0.2} $color="#c9d0c6">Search</Text></Slot>
      <svg width="58" height="31" viewBox="0 0 58 31">
        <path d="M8 22l5-12 2-9 4 1 3 9 2 11z" fill="#cf9a78" />
        <path d="M15 1l4 1 3 9 1 10-6-4z" fill="#e7bd98" />
        <path d="M34 22l5-14 3-1 2 4 3-8 5 8 3 14z" fill="#cf9a78" />
        <path d="M46 3l4 6 4 13-8-5z" fill="#a8a39b" />
        <path d="M22 24l5-9 2 5 4-4 3 9z" fill="#9bd6dc" />
        <path d="M0 25c5-6 10-6 15-2s9 3 14 1 10-6 16-5 10 4 12 6c-8 4-12 6-26 6S6 29 0 25z" fill="#4a74bd" />
        <path d="M3 26c5-4 8-3 13 0s10 3 15 0 12-5 18-2c-6 5-12 5-20 5S9 29 3 26z" fill="#e8edf5" />
      </svg>
    </SearchBox>
    <TaskButton $w={30}>
      <Logo>
        <rect x="0" y="8" width="23" height="20" fill="#5c605b" />
        <rect x="8" y="1" width="22" height="20" fill="#ececec" />
        <rect x="8" y="8" width="15" height="13" fill="#d6d7d5" />
      </Logo>
    </TaskButton>
    <Slot $w={25} />
    <TaskButton $w={30}>
      <Logo>
        <path d="M8 2h11c3 0 3 3 4 6h-7c-3 0-4 3-5 7s-2 5-5 5c-4 0-6-1-5-5L4 6c1-3 2-4 4-4z" fill="#1d8fd8" />
        <path d="M4 8l-3 9c-1 4 2 5 6 5 2 0 3-2 4-6z" fill="#8cc152" />
        <path d="M22 28H11c-3 0-3-3-4-6h7c3 0 4-3 5-7s2-5 5-5c4 0 6 1 5 5l-3 9c-1 3-2 4-4 4z" fill="#f2a35c" />
        <path d="M26 20l3-6c1-4-2-5-6-5-2 0-3 3-4 7z" fill="#b35ccf" />
        <path d="M7 22h7l-1 6h-2c-3 0-3-3-4-6z" fill="#e8552f" />
      </Logo>
    </TaskButton>
    <Slot $w={25} />
    <TaskButton $w={30}>
      <Logo>
        <circle cx="25" cy="7" r="3.3" fill="#5b62c3" />
        <circle cx="15.5" cy="5" r="4.5" fill="#7b83eb" />
        <path d="M19 11h11v8c0 4-4 6-8 5z" fill="#5059c9" />
        <path d="M8 11h14v10c0 5-3 7.500-7 7.500S8 25 8 21z" fill="#7b83eb" />
        <rect x="0" y="6" width="16" height="16" rx="1.5" fill="#454fb0" />
        <path d="M4 10.5h8M8 10.5V18" stroke="#fff" strokeWidth="2" />
      </Logo>
    </TaskButton>
    <Slot $w={25} />
    <TaskButton $w={30}>
      <Logo>
        <path d="M8 6V2h14v4" stroke="#35b1ec" strokeWidth="2" />
        <path d="M0.5 5h29v21c0 2-1 3.5-3.5 3.5H4C2 29.5 0.5 28 0.5 26z" fill="#f0f0f0" />
        <rect x="9" y="12" width="5.5" height="5.5" fill="#d9512c" />
        <rect x="15.5" y="12" width="5.5" height="5.5" fill="#6fa52b" />
        <rect x="9" y="18.5" width="5.5" height="5.5" fill="#2aa7e4" />
        <rect x="15.5" y="18.5" width="5.5" height="5.5" fill="#f4b72a" />
      </Logo>
    </TaskButton>
    <Slot $w={25} />
    <TaskButton $w={30} $open>
      <Logo>
        <path
          d="M1 14C2 5 8 0 15 0c9 0 15 6 15 13 0 4-3 7-7 7-3 0-4-1-4-2 1-1 1-2 1-3 0-3-2-5-5-5C9 10 3 12 1 17z"
          fill="#2aa9df"
        />
        <path
          d="M15 0c9 0 15 6 15 13 0 4-3 7-7 7-3 0-4-1-4-2 1-1 1-2 1-3 0-3-1-4-3-5 3-3 2-7-2-10z"
          fill="#3fbf7a"
        />
        <path d="M1 14c1-4 5-7 10-7 5 0 7 2 8 4-5-2-8 2-7 7 1 6 7 8 14 6-3 4-7 6-11 6C6 30 0 23 1 14z" fill="#1277cc" />
        <circle cx="8" cy="22.5" r="7.5" fill="#f0f0f0" />
        <circle cx="8" cy="20" r="2.2" fill="#777" />
        <path d="M4.5 26.5c0-4 7-4 7 0z" fill="#777" />
      </Logo>
    </TaskButton>
    <Slot $w={25} />
    <TaskButton $w={30}>
      <Logo>
        <rect x="0.5" width="28.5" height="29" rx="4" fill="#fbfbfb" />
        <path d="M6 8v14M10.500 22V10l4.500 8 4.500-8v12" stroke="#5b5fb5" strokeWidth="2.2" />
        <path d="M23.5 8v14" stroke="#22336e" strokeWidth="2.2" />
      </Logo>
    </TaskButton>
    <Slot $w={25} />
    <TaskButton $w={30}>
      <Logo>
        <circle cx="14.5" cy="14.5" r="14" fill="#3989dd" />
        <path d="M5.5 13a9 9 0 0117-3M23.5 16a9 9 0 01-17 3" stroke="#fff" strokeWidth="2.2" />
        <path d="M7 13h8l-3-3M22 16h-8l3 3" stroke="#fff" strokeWidth="2" />
      </Logo>
    </TaskButton>
    <Slot $w={25} />
    <TaskButton $w={30} $open>
      <Logo>
        <path d="M0 2h10l3 4h17v6H0z" fill="#e5941d" />
        <rect y="6" width="30" height="22" rx="1" fill="#fbc740" />
        <path d="M0 2h9l4 5-3 3H0z" fill="#e8971a" />
        <path d="M5 28v-5c0-2 1-3 3-3h14c2 0 3 1 3 3v5z" fill="#1f7ad1" />
        <path d="M9 24h12" stroke="#13508f" strokeWidth="2" />
      </Logo>
    </TaskButton>
    <Slot $w={15} />
    <TaskButton $w={50} $focused>
      <Logo>
        <rect x="8" y="1" width="22" height="28" rx="2" fill="#21a366" />
        <path d="M19 1h9c1 0 2 1 2 2v12H19z" fill="#33c481" />
        <path d="M8 15h11v14h-9c-1 0-2-1-2-2z" fill="#185c37" />
        <path d="M19 15h11v12c0 1-1 2-2 2h-9z" fill="#107c41" />
        <rect x="0" y="7" width="16" height="16" rx="1.5" fill="#107c41" />
        <path d="M5 11l6 8M11 11l-6 8" stroke="#fff" strokeWidth="2" />
      </Logo>
    </TaskButton>
    <Slot $w={139} />
    <Slot $w={36}>
      <svg width="14" height="9" viewBox="0 0 14 9" fill="none">
        <path d="M1 8l6-6.5L13 8" stroke="#fff" strokeWidth="1.8" />
      </svg>
    </Slot>
    <Slot $w={42}>
      <svg width="20" height="14" viewBox="0 0 20 14">
        <path d="M4 13a4.2 4.2 0 010-8.2A6 6 0 0115.5 5 4 4 0 0116 13z" fill="#ededed" />
        <path d="M4 5a6 6 0 0111 0l-6 4z" fill="#aaa" />
      </svg>
    </Slot>
    <Slot $w={38}>
      <svg width="17" height="15" viewBox="0 0 17 15" stroke="#fff" strokeWidth="2.2" fill="none">
        <path d="M0 4h17M0 11h17" />
        <path d="M11 0.5v7M5 7.5v7" strokeWidth="3" />
      </svg>
    </Slot>
    <Slot $w={43}>
      <svg width="18" height="14" viewBox="0 0 18 14" stroke="#fff" strokeWidth="1.9" fill="none">
        <path d="M1 0v14M5 14V3l4 8 4-8v11M17 0v14" />
      </svg>
    </Slot>
    <Clock $w={30} $align="center">
      <Text $size={14.5} $ls={-0.1}>ENG</Text>
      <Text $size={14.5}>US</Text>
    </Clock>
    <Slot $w={22} />
    <Slot $w={30}>
      <svg width="20" height="16" viewBox="0 0 20 16" fill="none" stroke="#fff" strokeWidth="1.6">
        <path d="M1 5.5c5-5.5 13-5.5 18 0M4 8.7c3.5-3.8 8.5-3.8 12 0M6.8 11.7c2-2 4.4-2 6.4 0" />
        <circle cx="10" cy="13.8" r="1.2" fill="#fff" />
      </svg>
    </Slot>
    <Slot $w={31}>
      <svg width="20" height="16" viewBox="0 0 20 16" fill="none" stroke="#fff" strokeWidth="1.4">
        <path d="M1 5.5h3L9 1v14l-5-4.5H1zM11.5 5c1.3 2 1.3 4 0 6M14 3c2.5 3.5 2.5 6.5 0 10" />
        <path d="M16.5 1c3.5 4.5 3.5 9.5 0 14" stroke="#7d8879" />
      </svg>
    </Slot>
    <Slot $w={33}>
      <svg width="20" height="14" viewBox="0 0 20 14" fill="none">
        <rect x="1" y="1" width="15" height="12" rx="2.5" stroke="#fff" strokeWidth="1.7" />
        <rect x="3.5" y="3.5" width="6" height="7" fill="#fff" />
        <path d="M18.5 5v4" stroke="#fff" strokeWidth="2" />
      </svg>
    </Slot>
    <Clock $w={76} $align="right">
      <Text $size={14.5} $ls={-0.1}>11:16 PM</Text>
      <Text $size={14.5} $ls={-0.15}>1/30/2025</Text>
    </Clock>
  </Taskbar>
);

/* watermark floats over the sheet tabs and the taskbar */
const Watermark = styled.svg`
  position: absolute;
  left: 845px;
  top: 945px;
`;

const Avatar = () => (
  <svg width="30" height="30" viewBox="0 0 30 30">
    <rect width="30" height="30" fill="#b1b1b1" />
    <ellipse cx="14.5" cy="11" rx="6" ry="7" fill="#fff" />
    <path d="M3 30c0-8 1.5-12 6-12.5 2 2.5 9 2.5 11 0C25 18 27 22 27 30z" fill="#fff" />
  </svg>
);

const App = () => (
  <Screen>
    <GlobalStyle />
    <Header>
      <HeaderArt width="620" height="81" viewBox="1300 0 620 81">
        <g fill="#24613d" opacity="0.8">
          <path
            d="M1325 0c-6 15-6 30-5 48 8-7 18-8 30-5s30 10 50 6c10-4 6-20-6-24-14-4-28-4-30-12-2-6-6-13-10-13z"
            opacity="0.6"
          />
          <path d="M1432 0c-3 20 2 40-5 50 6 10 20 13 40 11 24-3 50-8 71-1 2-20 0-40 4-60z" />
          <path d="M1565 0c2 22 5 40 0 55 18-10 40-12 64-8 40 8 76 12 100 9 26-4 36-12 36-18 0-5-6-1-14 0 4-12 6-26 4-38z" />
          <path d="M1800 0c6 14 12 22 25 24 14 2 22-8 35-24zM1842 40c6-12 22-10 26 0s-2 26-12 30c-8-4-16-16-14-30z" opacity="0.5" />
          <path d="M1880 30c10 10 26 18 40 22v20c-20-6-36-18-40-42z" opacity="0.7" />
        </g>
      </HeaderArt>
      <TitleBar>
        <Slot $w={31} />
        <Slot $w={852}>
          <svg width="10" height="9" viewBox="0 0 10 9" fill="none">
            <path d="M0 0.7h9.5M1 3.5h7.5L4.75 7.5z" stroke="#fff" strokeWidth="1.2" />
          </svg>
        </Slot>
        <Slot $w={586}><DocTitle>1 SEC  [Group]  -  Excel</DocTitle></Slot>
        <Slot $w={62}>
          <svg width="18" height="19" viewBox="0 0 18 19" fill="none" stroke="#fff" strokeWidth="1.3">
            <circle cx="11" cy="6.8" r="5.9" />
            <path d="M7 11.3L0.7 18.3" />
          </svg>
        </Slot>
        <Slot $w={116}><Text $size={14.5} $ls={0}>ahmed bebooo</Text></Slot>
        <Slot $w={64}><Avatar /></Slot>
        <Slot $w={59}>
          <svg width="17" height="14" viewBox="0 0 17 14" fill="none" stroke="#fff" strokeWidth="1.3">
            <path d="M0.7 0.7h15.6v12.6H0.7zM1 3.3h15M8.5 11.5V5M5.5 8l3-3 3 3" />
          </svg>
        </Slot>
        <Slot $w={57}>
          <svg width="14" height="2"><rect width="14" height="1.5" fill="#fff" /></svg>
        </Slot>
        <Slot $w={57}>
          <svg width="14" height="14" viewBox="0 0 14 14" fill="none" stroke="#fff" strokeWidth="1.4">
            <rect x="0.7" y="3.2" width="9.6" height="10" rx="1.5" />
            <path d="M3 0.9h7.5c1.7 0 2.5 1 2.5 2.5v7.5" />
          </svg>
        </Slot>
        <svg width="14" height="14" viewBox="0 0 14 14" fill="none">
          <path d="M0.7 0.7l12.6 12.6M13.3 0.7L0.7 13.3" stroke="#fff" strokeWidth="1.4" />
        </svg>
      </TitleBar>
      <TabBar>
        <Tab $w={73}>File</Tab>
        <Slot $w={3} />
        <Tab $w={66} $active $ls={-0.2}>Home</Tab>
        <Tab $w={64}>Insert</Tab>
        <Tab $w={105}>Page Layout</Tab>
        <Tab $w={90}>Formulas</Tab>
        <Tab $w={56}>Data</Tab>
        <Tab $w={78}>Review</Tab>
        <Tab $w={54}>View</Tab>
        <Tab $w={64}>Help</Tab>
        <Share>
          <Slot $w={18}>
            <svg width="18" height="19" viewBox="0 0 18 19" fill="none" stroke="#fff" strokeWidth="1.3">
              <circle cx="7.5" cy="5.7" r="4.9" />
              <path d="M0.7 18.5c.3-4.5 2-7 5-8M13 9v9M8.5 14.5H18M10 10c.8.4 1 .8 1.5 1.5" />
            </svg>
          </Slot>
          Share
        </Share>
      </TabBar>
    </Header>

    <RibbonBar />

    <FormulaBar>
      <Field $w={131}>
        <Slot $w={7} />
        <Slot $w={107}><Text $ls={-0.2} $color="#444">H81</Text></Slot>
        <svg width="8" height="5"><path d="M0 0h8L4 5z" fill="#666" /></svg>
      </Field>
      <Dots $ml={17} $mr={17}><i /></Dots>
      <Field $w={137} $gap={3}>
        <Slot $w={14} />
        <Slot $w={44}>
          <svg width="16" height="15" viewBox="0 0 16 15">
            <path d="M1 1l14 13M14 1L2 14" stroke="#b9b9b9" strokeWidth="2" />
          </svg>
        </Slot>
        <Slot $w={46}>
          <svg width="18" height="15" viewBox="0 0 18 15" fill="none">
            <path d="M1.5 8.5L6 13 16.5 1.5" stroke="#b9b9b9" strokeWidth="2.8" />
          </svg>
        </Slot>
        <Fx>fx</Fx>
      </Field>
      <Field>
        <Grow />
        <svg width="20" height="8" viewBox="0 0 20 8" fill="none">
          <path d="M7.5 1.5L11 5.5l3.5-4" stroke="#555" strokeWidth="2.4" />
        </svg>
      </Field>
    </FormulaBar>

    <SheetGrid />
    <Sheets />
    <Status />
    <Tasks />

    <Watermark width="230" height="120" viewBox="0 0 230 120">
      <text
        x="229"
        y="58"
        fontFamily="DejaVu Sans"
        fontWeight="700"
        fontSize="72"
        textLength="228"
        lengthAdjust="spacingAndGlyphs"
        direction="rtl"
        fill="#bdbdbd"
        stroke="#bdbdbd"
        strokeWidth="3"
        strokeLinejoin="round"
        opacity="0.38"
      >
        مستقل
      </text>
      <text
        x="0"
        y="104"
        fontFamily="Open Sans"
        fontWeight="600"
        fontSize="36"
        textLength="229"
        lengthAdjust="spacingAndGlyphs"
        fill="#9a9a9a"
        opacity="0.55"
      >
        mostaql.com
      </text>
    </Watermark>
  </Screen>
);

export default App;
